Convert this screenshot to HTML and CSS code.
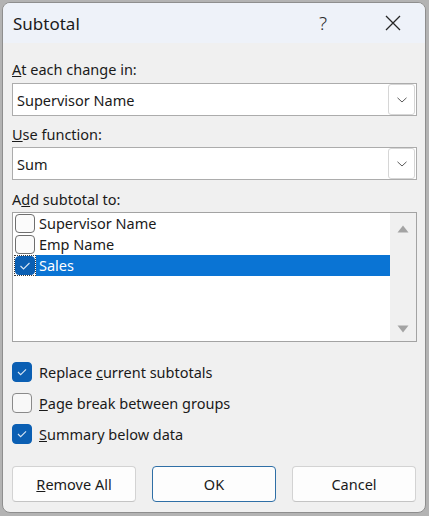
FILE: index.html
```html
<!DOCTYPE html>
<html>
<head>
<meta charset="utf-8">
<link rel="stylesheet" href="styles.css">
</head>
<body>
<div class="window">
  <div class="titlebar">
    <span class="title">Subtotal</span>
    <span class="help">?</span>
    <span class="close"><svg width="16" height="16" viewBox="0 0 16 16"><path d="M1 1 L15 15 M15 1 L1 15" stroke="#262626" stroke-width="1.3" fill="none"/></svg></span>
  </div>
  <div class="content">
    <div class="label label-first"><u>A</u>t each change in:</div>
    <div class="combo">
      <span class="value">Supervisor Name</span>
      <span class="dd"><svg width="10" height="6" viewBox="0 0 10 6"><path d="M0.5 0.8 L5 5 L9.5 0.8" stroke="#5a5a5a" stroke-width="1" fill="none"/></svg></span>
    </div>
    <div class="label label-mid"><u>U</u>se function:</div>
    <div class="combo combo-second">
      <span class="value">Sum</span>
      <span class="dd"><svg width="10" height="6" viewBox="0 0 10 6"><path d="M0.5 0.8 L5 5 L9.5 0.8" stroke="#5a5a5a" stroke-width="1" fill="none"/></svg></span>
    </div>
    <div class="label label-list">A<u>d</u>d subtotal to:</div>
    <div class="listbox">
      <div class="items">
        <div class="row">
          <span class="lcheck"><span class="lbox"></span></span>
          <span class="ltext">Supervisor Name</span>
        </div>
        <div class="row">
          <span class="lcheck"><span class="lbox"></span></span>
          <span class="ltext">Emp Name</span>
        </div>
        <div class="row row-selected">
          <span class="lcheck lcheck-focus"><span class="lbox lbox-on"><svg width="18" height="18" viewBox="0 0 18 18"><path d="M4.5 9 L7.5 12 L13.5 6" stroke="#d8e6f4" stroke-width="1.1" fill="none"/></svg></span></span>
          <span class="ltext ltext-selected">Sales</span>
        </div>
      </div>
      <div class="scrollbar">
        <svg width="12" height="8" viewBox="0 0 12 8"><path d="M6 0.5 L11.5 7.5 L0.5 7.5 Z" fill="#a3a3a3"/></svg>
        <svg width="12" height="8" viewBox="0 0 12 8"><path d="M0.5 0.5 L11.5 0.5 L6 7.5 Z" fill="#a3a3a3"/></svg>
      </div>
    </div>
    <div class="options">
      <div class="option">
        <span class="box box-on"><svg width="20" height="20" viewBox="0 0 20 20"><path d="M5.5 10 L8.5 13 L14.5 7" stroke="#d8e6f4" stroke-width="1.2" fill="none"/></svg></span>
        <span class="otext">Replace <u>c</u>urrent subtotals</span>
      </div>
      <div class="option">
        <span class="box"></span>
        <span class="otext"><u>P</u>age break between groups</span>
      </div>
      <div class="option">
        <span class="box box-on"><svg width="20" height="20" viewBox="0 0 20 20"><path d="M5.5 10 L8.5 13 L14.5 7" stroke="#d8e6f4" stroke-width="1.2" fill="none"/></svg></span>
        <span class="otext"><u>S</u>ummary below data</span>
      </div>
    </div>
    <div class="buttons">
      <button class="btn"><u>R</u>emove All</button>
      <button class="btn btn-default">OK</button>
      <button class="btn">Cancel</button>
    </div>
  </div>
</div>
</body>
</html>
```

FILE: styles.css
```css
html, body {
  margin: 0;
  padding: 0;
  width: 429px;
  height: 516px;
  overflow: hidden;
  background: #b3b3b3;
  font-family: "Noto Sans", "Open Sans", sans-serif;
  color: #1a1a1a;
}

.window {
  box-sizing: border-box;
  margin: 2px 3px 3px 2px;
  height: 511px;
  border: 1px solid #8e8e8e;
  border-radius: 8px;
  background: #f0f0f0;
  overflow: hidden;
  display: flex;
  flex-direction: column;
}

.titlebar {
  height: 40px;
  flex: none;
  background: #eef2f9;
  display: flex;
  align-items: center;
  padding-left: 10px;
  padding-right: 9px;
}

.title {
  flex: 1;
  font-size: 17px;
  color: #1b1b1b;
}

.help {
  width: 46px;
  text-align: center;
  font-size: 19px;
  font-weight: 300;
  color: #2a2a2a;
}

.close {
  width: 46px;
  margin-left: 24px;
  display: flex;
  justify-content: center;
  align-items: center;
}

.content {
  display: flex;
  flex-direction: column;
  padding: 0 8px 0 9px;
  font-size: 14.5px;
}

.label {
  height: 20px;
  line-height: 20px;
}

.label-first { margin-top: 16px; }
.label-mid { margin-top: 8px; }
.label-list { margin-top: 9px; }

.combo {
  box-sizing: border-box;
  height: 33px;
  margin-top: 4px;
  border: 1px solid #acacac;
  background: #ffffff;
  display: flex;
  align-items: center;
  padding-left: 4px;
  padding-right: 1px;
}

.combo-second { margin-top: 3px; }

.value {
  flex: 1;
}

.dd {
  box-sizing: border-box;
  width: 27px;
  height: 31px;
  border: 1px solid #d6d6d6;
  border-radius: 3px;
  background: #ffffff;
  display: flex;
  align-items: center;
  justify-content: center;
}

.listbox {
  box-sizing: border-box;
  height: 130px;
  margin-top: 3px;
  border: 1px solid #a3a3a3;
  background: #ffffff;
  display: flex;
}

.items {
  flex: 1;
  display: flex;
  flex-direction: column;
}

.row {
  height: 21px;
  display: flex;
  align-items: stretch;
}

.lcheck {
  box-sizing: border-box;
  width: 23px;
  display: flex;
  align-items: center;
  padding-left: 2px;
}

.lcheck-focus {
  outline: 1px dotted #3a3a3a;
  outline-offset: -1px;
  padding-left: 1px;
  margin-left: 1px;
  width: 22px;
}

.lbox {
  box-sizing: border-box;
  width: 20px;
  height: 19px;
  border: 1px solid #6f6f6f;
  border-radius: 4px;
  background: #fbfbfb;
  display: flex;
  align-items: center;
  justify-content: center;
}

.lbox-on {
  background: #0b5fb3;
  border-color: #0b5fb3;
}

.ltext {
  flex: 1;
  padding-left: 3px;
  line-height: 21px;
}

.ltext-selected {
  background: #0a74d4;
  color: #ffffff;
}

.scrollbar {
  width: 26px;
  background: #f0f0f0;
  display: flex;
  flex-direction: column;
  align-items: center;
  justify-content: space-between;
  padding: 12px 0 8px 0;
}

.options {
  display: flex;
  flex-direction: column;
  gap: 11px;
  margin-top: 20px;
}

.option {
  height: 20px;
  display: flex;
  align-items: center;
}

.box {
  box-sizing: border-box;
  width: 20px;
  height: 20px;
  border: 1px solid #8a8a8a;
  border-radius: 4px;
  background: #f8f8f8;
  display: flex;
  align-items: center;
  justify-content: center;
}

.box-on {
  background: #0b5fb3;
  border-color: #0b5fb3;
}

.otext {
  margin-left: 7px;
  line-height: 20px;
}

.buttons {
  display: flex;
  gap: 16px;
  margin-top: 22px;
}

.btn {
  box-sizing: border-box;
  width: 124px;
  height: 36px;
  border: 1px solid #d3d3d3;
  border-bottom-color: #c4c4c4;
  border-radius: 4px;
  background: #fdfdfd;
  font-family: "Noto Sans", "Open Sans", sans-serif;
  font-size: 14.5px;
  color: #1a1a1a;
  padding: 0;
}

.btn-default {
  border: 1px solid #2f6fa6;
}
```
